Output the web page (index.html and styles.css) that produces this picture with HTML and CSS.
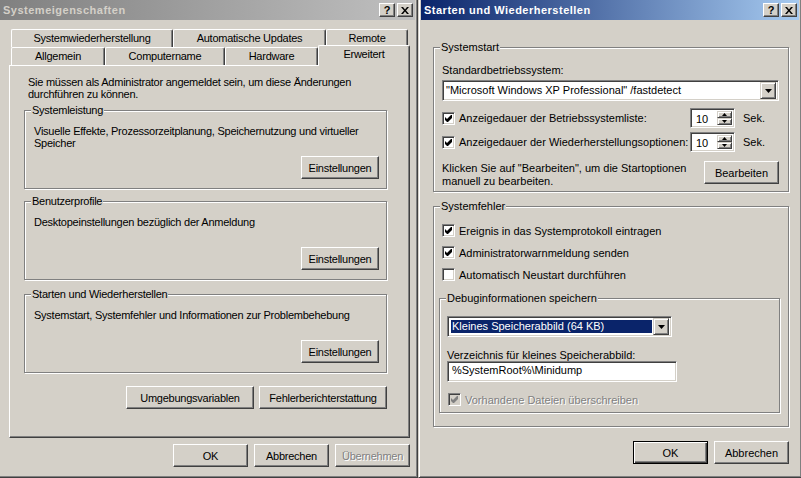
FILE: index.html
```
<!DOCTYPE html>
<html lang="de">
<head>
  <meta charset="UTF-8">
  <title>Systemeigenschaften</title>
  <link rel="stylesheet" href="styles.css">
</head>
<body>
<div class="desktop">

  <div class="win win-left">
    <div class="titlebar inactive">
      <span class="title">Systemeigenschaften</span>
      <span class="tbtn">?</span>
      <span class="tbtn"><svg width="8" height="7" viewBox="0 0 8 7"><path d="M0 0h2l2 2.5L6 0h2L5 3.5 8 7H6L4 4.5 2 7H0l3-3.5z"/></svg></span>
    </div>

    <div class="tabrow back">
      <div class="tab t-sys">Systemwiederherstellung</div>
      <div class="tab t-upd">Automatische Updates</div>
      <div class="tab t-rem">Remote</div>
    </div>
    <div class="tabrow front">
      <div class="tab t-gen">Allgemein</div>
      <div class="tab t-comp">Computername</div>
      <div class="tab t-hw">Hardware</div>
      <div class="tab t-adv selected">Erweitert</div>
    </div>

    <div class="panel">
      <p class="intro">Sie müssen als Administrator angemeldet sein, um diese Änderungen<br>durchführen zu können.</p>

      <div class="group box g-perf">
        <span class="group-title">Systemleistung</span>
        <p class="desc">Visuelle Effekte, Prozessorzeitplanung, Speichernutzung und virtueller<br>Speicher</p>
        <div class="box-btns"><button class="btn btn-set">Einstellungen</button></div>
      </div>

      <div class="group box g-prof">
        <span class="group-title">Benutzerprofile</span>
        <p class="desc">Desktopeinstellungen bezüglich der Anmeldung</p>
        <div class="box-btns"><button class="btn btn-set">Einstellungen</button></div>
      </div>

      <div class="group box g-start">
        <span class="group-title">Starten und Wiederherstellen</span>
        <p class="desc">Systemstart, Systemfehler und Informationen zur Problembehebung</p>
        <div class="box-btns"><button class="btn btn-set">Einstellungen</button></div>
      </div>

      <div class="env-row">
        <button class="btn btn-env">Umgebungsvariablen</button>
        <button class="btn btn-env">Fehlerberichterstattung</button>
      </div>
    </div>

    <div class="dlg-btns left-btns">
      <button class="btn">OK</button>
      <button class="btn">Abbrechen</button>
      <button class="btn" disabled>Übernehmen</button>
    </div>
  </div>

  <div class="win win-right">
    <div class="titlebar active">
      <span class="title">Starten und Wiederherstellen</span>
      <span class="tbtn">?</span>
      <span class="tbtn"><svg width="8" height="7" viewBox="0 0 8 7"><path d="M0 0h2l2 2.5L6 0h2L5 3.5 8 7H6L4 4.5 2 7H0l3-3.5z"/></svg></span>
    </div>

    <div class="group sys-start">
      <span class="group-title">Systemstart</span>
      <div class="label">Standardbetriebssystem:</div>
      <div class="combo combo-os">
        <span class="combo-text">"Microsoft Windows XP Professional" /fastdetect</span>
        <span class="drop"><svg width="7" height="4" viewBox="0 0 7 4"><path d="M0 0h7L3.5 4z"/></svg></span>
      </div>

      <div class="spin-row first">
        <span class="cb"><svg width="7" height="7" viewBox="0 0 7 7"><path d="M0 2L2 4L6 0H7V3L3 7H2L0 5Z"/></svg></span>
        <span class="spin-label">Anzeigedauer der Betriebssystemliste:</span>
        <span class="spin">
          <span class="spin-val">10</span>
          <span class="spin-btns">
            <span class="arrow"><svg width="5" height="3" viewBox="0 0 5 3"><path d="M2.5 0L5 3H0z"/></svg></span>
            <span class="arrow"><svg width="5" height="3" viewBox="0 0 5 3"><path d="M0 0h5L2.5 3z"/></svg></span>
          </span>
        </span>
        <span class="unit">Sek.</span>
      </div>

      <div class="spin-row">
        <span class="cb"><svg width="7" height="7" viewBox="0 0 7 7"><path d="M0 2L2 4L6 0H7V3L3 7H2L0 5Z"/></svg></span>
        <span class="spin-label">Anzeigedauer der Wiederherstellungsoptionen:</span>
        <span class="spin">
          <span class="spin-val">10</span>
          <span class="spin-btns">
            <span class="arrow"><svg width="5" height="3" viewBox="0 0 5 3"><path d="M2.5 0L5 3H0z"/></svg></span>
            <span class="arrow"><svg width="5" height="3" viewBox="0 0 5 3"><path d="M0 0h5L2.5 3z"/></svg></span>
          </span>
        </span>
        <span class="unit">Sek.</span>
      </div>

      <div class="edit-row">
        <p class="hint">Klicken Sie auf "Bearbeiten", um die Startoptionen<br>manuell zu bearbeiten.</p>
        <button class="btn btn-edit">Bearbeiten</button>
      </div>
    </div>

    <div class="group sys-err">
      <span class="group-title">Systemfehler</span>
      <div class="check-row">
        <span class="cb"><svg width="7" height="7" viewBox="0 0 7 7"><path d="M0 2L2 4L6 0H7V3L3 7H2L0 5Z"/></svg></span>
        Ereignis in das Systemprotokoll eintragen
      </div>
      <div class="check-row">
        <span class="cb"><svg width="7" height="7" viewBox="0 0 7 7"><path d="M0 2L2 4L6 0H7V3L3 7H2L0 5Z"/></svg></span>
        Administratorwarnmeldung senden
      </div>
      <div class="check-row">
        <span class="cb"></span>
        Automatisch Neustart durchführen
      </div>

      <div class="group debug">
        <span class="group-title">Debuginformationen speichern</span>
        <div class="combo combo-dump">
          <span class="combo-text sel">Kleines Speicherabbild (64 KB)</span>
          <span class="drop"><svg width="7" height="4" viewBox="0 0 7 4"><path d="M0 0h7L3.5 4z"/></svg></span>
        </div>
        <div class="label dir-label">Verzeichnis für kleines Speicherabbild:</div>
        <div class="edit">%SystemRoot%\Minidump</div>
        <div class="check-row disabled">
          <span class="cb"><svg width="7" height="7" viewBox="0 0 7 7"><path d="M0 2L2 4L6 0H7V3L3 7H2L0 5Z"/></svg></span>
          Vorhandene Dateien überschreiben
        </div>
      </div>
    </div>

    <div class="dlg-btns right-btns">
      <button class="btn default">OK</button>
      <button class="btn">Abbrechen</button>
    </div>
  </div>

</div>
</body>
</html>
```

FILE: styles.css
```
* { box-sizing: border-box; }
body {
  margin: 0;
  overflow: hidden;
  background: #3a6ea5;
  font-family: 'Liberation Sans', Arial, sans-serif;
  font-size: 11px;
  color: #000;
}
p { margin: 0; }
.desktop { display: flex; align-items: flex-start; }

/* window frame */
.win {
  flex: none;
  height: 481px;
  margin-top: -3px;
  padding: 2px;
  background: #d4d0c8;
  border: 1px solid;
  border-color: #d4d0c8 #404040 #404040 #d4d0c8;
  box-shadow: inset 1px 1px #fff, inset -1px -1px #808080;
}
.win-left { width: 421px; margin-left: -3px; letter-spacing: -0.25px; }
.win-right { width: 384px; }

.titlebar { display: flex; align-items: center; height: 20px; padding: 0 2px 0 3px; }
.titlebar.inactive { background: linear-gradient(to right, #808080, #c0c0c0); color: #d4d0c8; }
.titlebar.active { background: linear-gradient(to right, #0a246a, #a6caf0); color: #fff; }
.title { flex: 1; font-weight: bold; letter-spacing: 0.5px; white-space: nowrap; }
.tbtn {
  width: 16px; height: 14px; margin-left: 2px;
  display: flex; align-items: center; justify-content: center;
  background: #d4d0c8; color: #000;
  font-weight: bold; font-size: 11px; line-height: 12px; letter-spacing: 0;
  border: 1px solid; border-color: #fff #404040 #404040 #fff;
  box-shadow: inset -1px -1px #808080;
}

/* 3d controls */
.btn {
  font: inherit; color: #000; letter-spacing: inherit;
  height: 23px; padding: 0;
  background: #d4d0c8;
  border: 1px solid; border-color: #fff #404040 #404040 #fff;
  box-shadow: inset -1px -1px #808080;
}
.btn.default {
  border-color: #000;
  box-shadow: inset 1px 1px #fff, inset -1px -1px #404040, inset -2px -2px #808080;
}
.btn:disabled { color: #808080; text-shadow: 1px 1px #fff; }

.combo, .edit, .spin, .cb {
  background: #fff;
  border: 1px solid; border-color: #808080 #fff #fff #808080;
  box-shadow: inset 1px 1px #404040, inset -1px -1px #d4d0c8;
}

/* tabs */
.tabrow { display: flex; height: 18px; margin-left: 11px; }
.tabrow.back { margin-top: 9px; }
.tab {
  flex: none; height: 18px;
  background: #d4d0c8;
  border: 1px solid #fff; border-right-color: #404040; border-bottom: 0;
  border-radius: 2px 2px 0 0;
  box-shadow: inset -1px 0 #808080;
  text-align: center; line-height: 17px; white-space: nowrap;
}
.t-sys { width: 162px; }
.t-upd { width: 153px; }
.t-rem { width: 82px; }
.t-gen { width: 94px; }
.t-comp { width: 120px; }
.t-hw { width: 93px; }
.tab.selected { width: 92px; height: 21px; margin-top: -2px; line-height: 16px; position: relative; z-index: 1; }

.panel {
  width: 401px; height: 373px; margin-left: 9px;
  border: 1px solid; border-color: #fff #404040 #404040 #fff;
  box-shadow: inset -1px -1px #808080;
}
.intro { margin: 10px 0 0 18px; line-height: 12px; }

/* group boxes */
.group {
  position: relative;
  border: 1px solid #808080;
  box-shadow: inset 1px 1px #fff, 1px 1px #fff;
}
.group-title {
  position: absolute; top: -7px; left: 6px;
  padding: 0 1px; background: #d4d0c8;
  line-height: 13px; white-space: nowrap;
}
.box { margin: 0 22px 0 14px; padding: 14px 7px 9px 9px; }
.g-perf { margin-top: 10px; }
.g-prof { margin-top: 12px; }
.g-start { margin-top: 14px; }
.desc { line-height: 12px; min-height: 24px; }
.box-btns { display: flex; justify-content: flex-end; margin-top: 7px; }
.btn-set { width: 78px; }
.env-row { display: flex; justify-content: flex-end; gap: 5px; margin: 13px 22px 0 0; }
.btn-env { width: 128px; }

.dlg-btns { display: flex; justify-content: flex-end; gap: 6px; }
.dlg-btns .btn { width: 75px; }
.left-btns { margin-top: 6px; padding-right: 5px; }
.right-btns { margin-top: 14px; padding-right: 10px; }

/* right dialog */
.sys-start { margin: 27px 10px 0 12px; padding: 16px 9px 3px 8px; }
.label { line-height: 13px; }
.combo { display: flex; align-items: center; height: 21px; padding: 2px; }
.combo-os { margin-top: 3px; }
.combo-text { flex: 1; padding-left: 1px; white-space: nowrap; line-height: 15px; }
.combo-text.sel { background: #0a246a; color: #fff; margin: 1px 1px 1px 1px; line-height: 13px; }
.drop {
  width: 16px; height: 17px; flex: none;
  display: flex; align-items: center; justify-content: center;
  background: #d4d0c8;
  border: 1px solid; border-color: #d4d0c8 #404040 #404040 #d4d0c8;
  box-shadow: inset 1px 1px #fff, inset -1px -1px #808080;
}

.spin-row { display: flex; align-items: center; height: 20px; margin-top: 4px; }
.spin-row.first { margin-top: 7px; }
.cb {
  width: 13px; height: 13px; flex: none; margin-right: 4px;
  display: flex; align-items: center; justify-content: center;
}
.spin-label { flex: 1; white-space: nowrap; }
.spin { width: 45px; height: 20px; display: flex; padding: 2px; margin-right: 8px; }
.spin-val { flex: 1; padding-left: 3px; line-height: 16px; }
.spin-btns { width: 15px; display: flex; flex-direction: column; }
.arrow {
  flex: 1; display: flex; align-items: center; justify-content: center;
  background: #d4d0c8;
  border: 1px solid; border-color: #d4d0c8 #404040 #404040 #d4d0c8;
  box-shadow: inset 1px 1px #fff, inset -1px -1px #808080;
}
.unit { width: 36px; }

.edit-row { display: flex; align-items: flex-start; margin-top: 9px; }
.hint { flex: 1; padding-top: 1px; line-height: 13px; }
.btn-edit { width: 75px; }

.sys-err { margin: 14px 10px 0 12px; padding: 17px 0 13px 0; }
.check-row { display: flex; align-items: center; height: 13px; padding-left: 8px; margin-bottom: 9px; white-space: nowrap; }
.debug { margin: 17px 8px 0 5px; padding: 17px 0 6px 7px; }
.combo-dump { width: 225px; }
.dir-label { margin-top: 12px; line-height: 12px; }
.edit { width: 230px; height: 21px; padding: 0 4px; line-height: 17px; }
.debug .check-row { margin: 11px 0 0 0; padding-left: 1px; }
.check-row.disabled { color: #808080; text-shadow: 1px 1px #fff; }
.check-row.disabled .cb { background: #d4d0c8; }
.check-row.disabled svg { fill: #808080; }
```
